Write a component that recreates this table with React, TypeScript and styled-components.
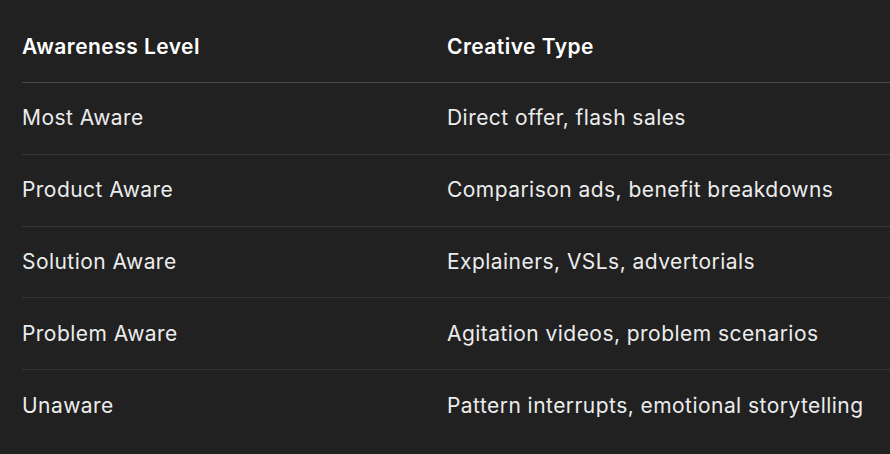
import React from "react";
import styled, { createGlobalStyle } from "styled-components";

const GlobalStyle = createGlobalStyle`
  html, body {
    margin: 0;
    padding: 0;
    background: #212121;
  }
  body {
    font-family: Inter, "Noto Sans", "Liberation Sans", sans-serif;
    -webkit-font-smoothing: antialiased;
  }
`;

const Wrapper = styled.div`
  width: 890px;
  height: 454px;
  overflow: hidden;
  padding: 11px 0 0 22px;
  box-sizing: border-box;
`;

const Table = styled.div`
  display: grid;
  grid-template-columns: 425px 1fr;
`;

const Cell = styled.div<{ $head?: boolean; $last?: boolean }>`
  height: ${(p) => (p.$head ? "72px" : "71.8px")};
  display: flex;
  align-items: center;
  box-sizing: border-box;
  padding-bottom: 1px;
  border-bottom: ${(p) =>
    p.$last ? "none" : p.$head ? "1px solid #4a4a4a" : "1px solid #353535"};
  color: ${(p) => (p.$head ? "#ffffff" : "#ececec")};
  font-size: 21px;
  letter-spacing: 0.45px;
  font-weight: ${(p) => (p.$head ? 600 : 400)};
  white-space: nowrap;
`;

interface IRow {
  level: string;
  creative: string;
}

const rows: IRow[] = [
  { level: "Most Aware", creative: "Direct offer, flash sales" },
  { level: "Product Aware", creative: "Comparison ads, benefit breakdowns" },
  { level: "Solution Aware", creative: "Explainers, VSLs, advertorials" },
  { level: "Problem Aware", creative: "Agitation videos, problem scenarios" },
  { level: "Unaware", creative: "Pattern interrupts, emotional storytelling" },
];

const App = () => {
  return (
    <>
      <GlobalStyle />
      <Wrapper>
        <Table>
          <Cell $head>Awareness Level</Cell>
          <Cell $head>Creative Type</Cell>
          {rows.map((row, i) => (
            <React.Fragment key={row.level}>
              <Cell $last={i === rows.length - 1}>{row.level}</Cell>
              <Cell $last={i === rows.length - 1}>{row.creative}</Cell>
            </React.Fragment>
          ))}
        </Table>
      </Wrapper>
    </>
  );
};

export default App;
